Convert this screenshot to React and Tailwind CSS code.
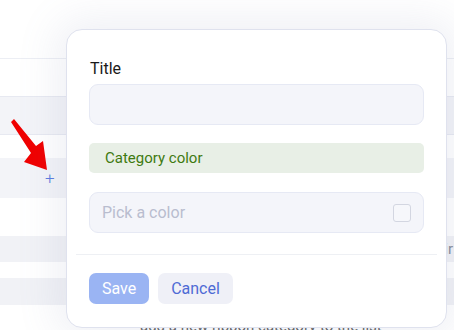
export default function App() {
  return (
    <div className="relative w-[454px] h-[330px] overflow-hidden bg-white" style={{ fontFamily: "Roboto, 'Liberation Sans', sans-serif" }}>
      {/* background page */}
      <div className="flex flex-col">
        <div className="h-[59px] border-b border-[#eceef4]" />
        <div className="h-[37px]" />
        <div className="h-[39px] bg-[#f3f4f8] border-y border-[#e7e9f1]" />
        <div className="h-[23px]" />
        <div className="h-[40px] bg-[#f3f4f8] flex justify-start pl-[45px] pt-[12px]">
          <span className="text-[#5b7be0] text-[17px] leading-none font-light">+</span>
        </div>
        <div className="h-[38px]" />
        <div className="h-[26px] bg-[#f1f2f6] flex justify-end">
          <span className="text-[#8a8d99] text-[15px] leading-[26px] pr-[1px]">ir</span>
        </div>
        <div className="h-[16px]" />
        <div className="h-[27px] bg-[#f1f2f6]" />
        <div className="h-[18px] pl-[140px] text-[15px] text-[#666] leading-[18px] pt-[12px] whitespace-nowrap">add a new ribbon category to the list</div>
      </div>

      {/* arrow */}
      <svg className="absolute left-0 top-0" width="60" height="180" viewBox="0 0 60 180">
        <polygon points="11,122 14,119 36,146 43,141 47,170 24,162 31,153" fill="#f00000" />
      </svg>

      {/* modal */}
      <div className="absolute left-[66px] top-[29px] w-[381px] h-[299px] bg-white rounded-[16px] border border-[#dfe2ee] shadow-[0_0_40px_10px_rgba(120,130,170,0.12)] flex flex-col pt-[28px]">
        <div className="px-[22px] flex flex-col">
          <label className="text-[16px] leading-[21px] text-[#1a1a1a] pl-px">Title</label>
          <div className="mt-[5px] h-[41px] rounded-[9px] bg-[#f4f5fa] border border-[#e6e9f4]" />
          <div className="mt-[18px] h-[30px] rounded-[5px] bg-[#e8efe6] flex items-center pl-[16px]">
            <span className="text-[15px] text-[#3f7a10]">Category color</span>
          </div>
          <div className="mt-[19px] h-[41px] rounded-[9px] bg-[#f4f5fa] border border-[#e6e9f4] flex items-center justify-between pl-[12px] pr-[12px]">
            <span className="text-[16px] text-[#b9bdcf]">Pick a color</span>
            <div className="w-[18px] h-[18px] rounded-[3px] border border-[#d3d6e1] bg-[#f6f7fb]" />
          </div>
        </div>
        <div className="mt-[21px] mx-[9px] border-t border-[#eef0f4]" />
        <div className="px-[22px] mt-[18px] flex gap-[9px]">
          <button className="h-[31px] w-[60px] rounded-[7px] bg-[#9ab4f3] text-white text-[16px]">Save</button>
          <button className="h-[31px] w-[75px] rounded-[7px] bg-[#eff0f7] text-[#4e6bd5] text-[16px]">Cancel</button>
        </div>
      </div>
    </div>
  );
}
